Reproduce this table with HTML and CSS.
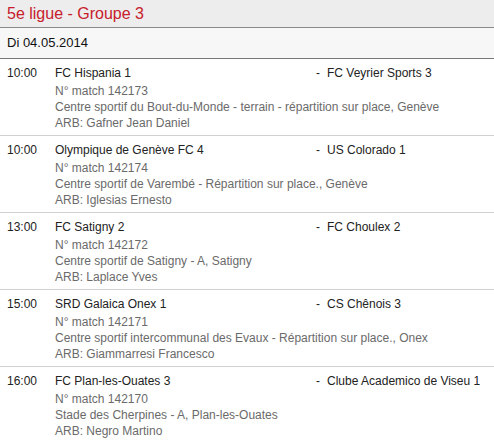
FILE: index.html
```html
<!DOCTYPE html>
<html>
<head>
<meta charset="utf-8">
<link rel="stylesheet" href="styles.css">
</head>
<body>
<div class="group">
  <div class="title">5e ligue - Groupe 3</div>
  <div class="date">Di 04.05.2014</div>
  <div class="match">
    <div class="time">10:00</div>
    <div class="info">
      <div class="teams"><span class="home">FC Hispania 1</span><span class="dash">-</span><span class="away">FC Veyrier Sports 3</span></div>
      <div class="detail">N° match 142173</div>
      <div class="detail">Centre sportif du Bout-du-Monde - terrain - répartition sur place, Genève</div>
      <div class="detail">ARB: Gafner Jean Daniel</div>
    </div>
  </div>
  <div class="match">
    <div class="time">10:00</div>
    <div class="info">
      <div class="teams"><span class="home">Olympique de Genève FC 4</span><span class="dash">-</span><span class="away">US Colorado 1</span></div>
      <div class="detail">N° match 142174</div>
      <div class="detail">Centre sportif de Varembé - Répartition sur place., Genève</div>
      <div class="detail">ARB: Iglesias Ernesto</div>
    </div>
  </div>
  <div class="match">
    <div class="time">13:00</div>
    <div class="info">
      <div class="teams"><span class="home">FC Satigny 2</span><span class="dash">-</span><span class="away">FC Choulex 2</span></div>
      <div class="detail">N° match 142172</div>
      <div class="detail">Centre sportif de Satigny - A, Satigny</div>
      <div class="detail">ARB: Laplace Yves</div>
    </div>
  </div>
  <div class="match">
    <div class="time">15:00</div>
    <div class="info">
      <div class="teams"><span class="home">SRD Galaica Onex 1</span><span class="dash">-</span><span class="away">CS Chênois 3</span></div>
      <div class="detail">N° match 142171</div>
      <div class="detail">Centre sportif intercommunal des Evaux - Répartition sur place., Onex</div>
      <div class="detail">ARB: Giammarresi Francesco</div>
    </div>
  </div>
  <div class="match">
    <div class="time">16:00</div>
    <div class="info">
      <div class="teams"><span class="home">FC Plan-les-Ouates 3</span><span class="dash">-</span><span class="away">Clube Academico de Viseu 1</span></div>
      <div class="detail">N° match 142170</div>
      <div class="detail">Stade des Cherpines - A, Plan-les-Ouates</div>
      <div class="detail">ARB: Negro Martino</div>
    </div>
  </div>
</div>
</body>
</html>
```
FILE: styles.css
```css
html, body {
  margin: 0;
  padding: 0;
  background: #ffffff;
}
body {
  font-family: "Liberation Sans", Arial, sans-serif;
  font-size: 12px;
  color: #222;
}
.title {
  background: #ededed;
  color: #c7202c;
  font-size: 16px;
  line-height: 27px;
  height: 27px;
  padding-left: 7px;
  border-bottom: 1px solid #8a8a8a;
}
.date {
  background: #f7f7f7;
  font-size: 13px;
  line-height: 30px;
  height: 30px;
  padding-left: 7px;
  border-bottom: 1px solid #777;
  color: #111;
}
.match {
  display: flex;
  padding: 6px 0 4px 7px;
  border-bottom: 1px solid #d0d0d0;
}
.match:last-child {
  border-bottom: none;
}
.time {
  width: 48px;
  flex: none;
  line-height: 16px;
  color: #222;
}
.info {
  flex: 1;
}
.teams {
  display: flex;
  line-height: 16px;
  margin-bottom: 2px;
  color: #222;
}
.home {
  width: 261px;
  flex: none;
}
.dash {
  width: 11px;
  flex: none;
}
.detail {
  line-height: 16px;
  color: #6a6a6a;
}
```
